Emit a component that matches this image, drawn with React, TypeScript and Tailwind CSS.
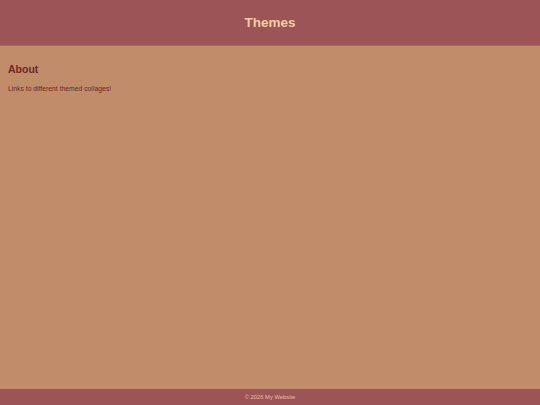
export default function App() {
  return (
    <div className="min-h-screen flex flex-col bg-[#c08c69] font-['Liberation_Sans',Arial,sans-serif]">
      <header className="h-[46px] bg-[#9c5457] flex items-center justify-center pt-[2px] border-b border-[#a86a5f]">
        <h1 className="text-[13.5px] font-bold text-[#f2cfa0]">Themes</h1>
      </header>

      <main className="flex-1 px-2 pt-[18px]">
        <h2 className="text-[10.5px] font-bold text-[#6e2a22] leading-none">About</h2>
        <p className="mt-[11px] text-[6.8px] text-[#6e2a22] leading-none">Links to different themed collages!</p>
      </main>

      <footer className="h-4 bg-[#9c5457] flex items-center justify-center">
        <p className="text-[5.8px] text-[#e8bfa0]">© 2026 My Website</p>
      </footer>
    </div>
  );
}
